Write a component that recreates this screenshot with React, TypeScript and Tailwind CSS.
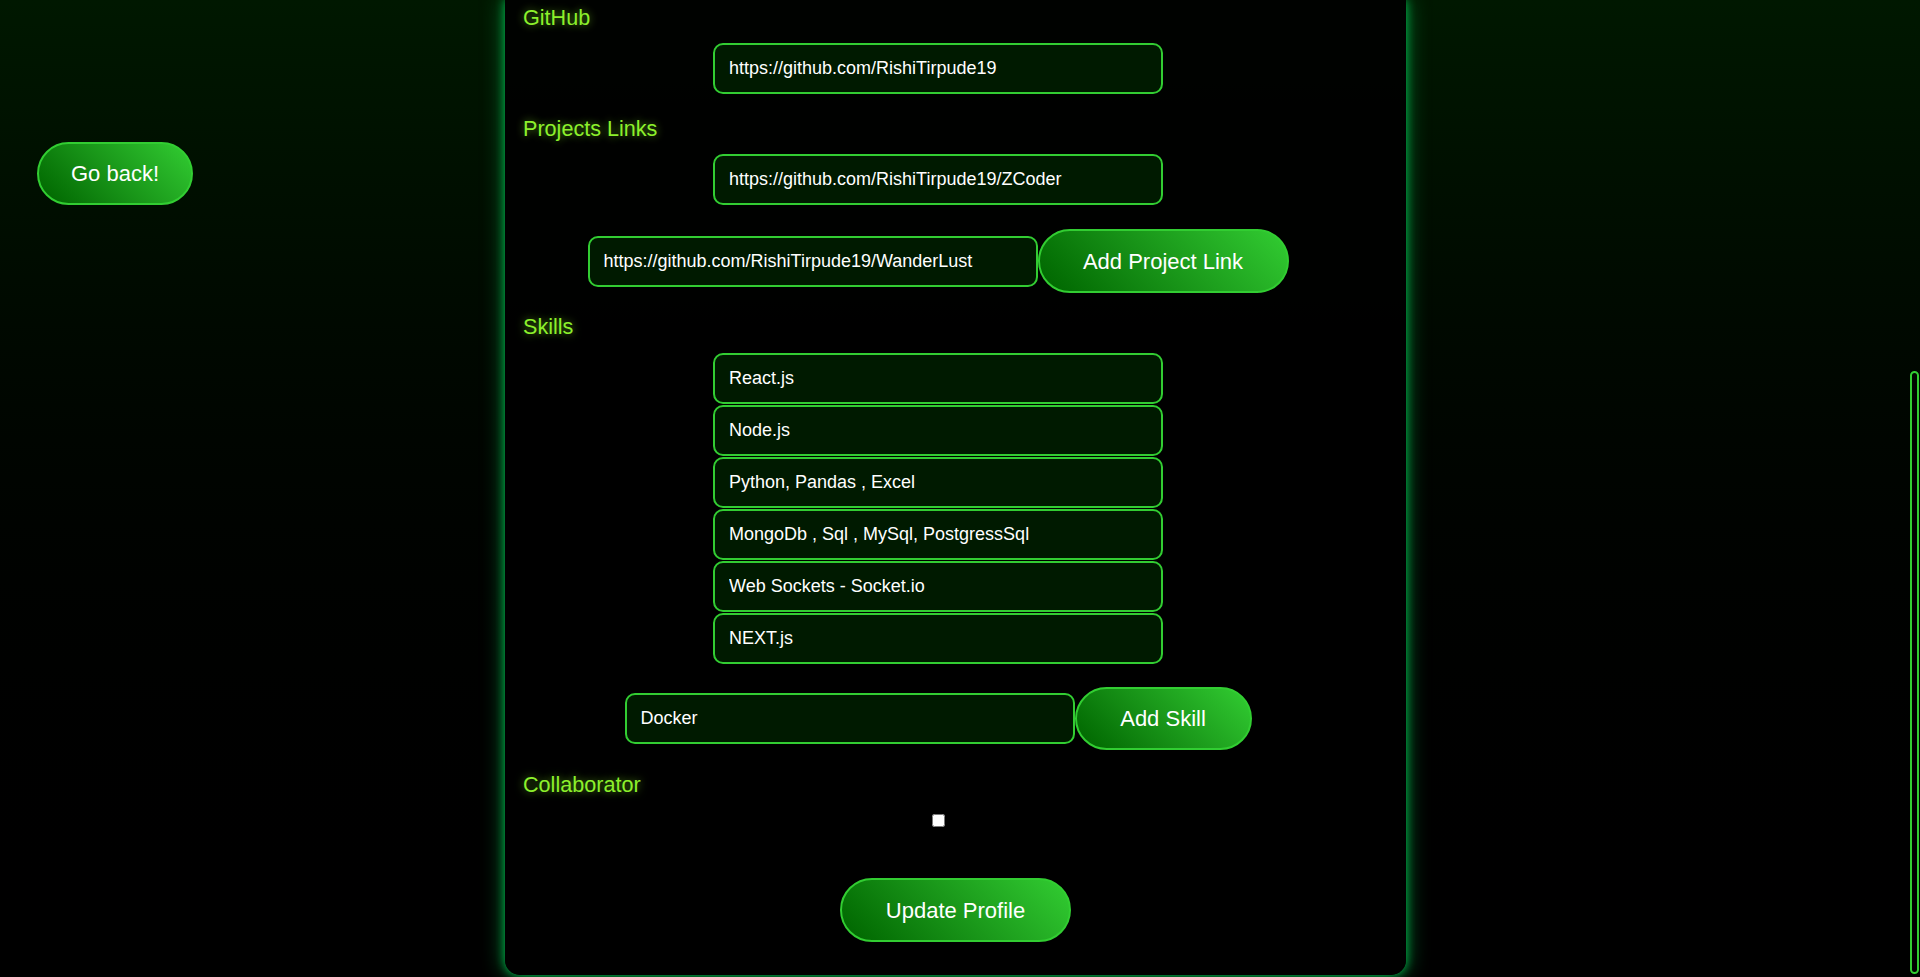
import React, { useState } from 'react'

const inputCls =
  'h-[51px] w-[450px] shrink-0 rounded-[10px] border-2 border-[#32cd32] bg-[#001a00] px-[14px] text-[18px] text-white outline-none'

const btnCls =
  'shrink-0 rounded-[32px] border-2 border-[#32cd32] bg-linear-45 from-[#006400] to-[#32cd32] text-[22px] text-white'

function Label({ children, className = '' }: { children: React.ReactNode; className?: string }) {
  return (
    <div
      className={`self-start h-[26px] text-[21.6px] leading-[26px] text-[#8cf02c] [text-shadow:0_0_8px_rgba(140,240,44,0.6)] ${className}`}
    >
      {children}
    </div>
  )
}

export default function App() {
  const [skills] = useState([
    'React.js',
    'Node.js',
    'Python, Pandas , Excel',
    'MongoDb , Sql , MySql, PostgressSql',
    'Web Sockets - Socket.io',
    'NEXT.js',
  ])
  const [newSkill, setNewSkill] = useState('Docker')
  const [newLink, setNewLink] = useState('https://github.com/RishiTirpude19/WanderLust')

  return (
    <div className="relative flex h-[977px] w-full overflow-hidden bg-linear-to-b from-[#001800] to-black font-['Liberation_Sans',Arial,sans-serif]">
      {/* Left side */}
      <div className="w-[505px] shrink-0 pl-[37px] pt-[142px]">
        <button className={`${btnCls} h-[63px] w-[156px]`}>Go back!</button>
      </div>

      {/* Card */}
      <div className="flex h-[975px] w-[901px] shrink-0 flex-col rounded-b-[15px] bg-black/90 shadow-[0_0_10px_#00b048,0_0_22px_#007a32]">
        <div className="flex flex-col items-center pl-[18px] pr-[53px] pt-[5px]">
          <Label>GitHub</Label>
          <input className={`${inputCls} mt-[12px]`} defaultValue="https://github.com/RishiTirpude19" />

          <Label className="mt-[22px]">Projects Links</Label>
          <input className={`${inputCls} mt-[12px]`} defaultValue="https://github.com/RishiTirpude19/ZCoder" />

          <div className="mt-[24px] flex items-center">
            <input className={inputCls} value={newLink} onChange={(e) => setNewLink(e.target.value)} />
            <button className={`${btnCls} h-[64px] w-[251px]`}>Add Project Link</button>
          </div>

          <Label className="mt-[21px]">Skills</Label>
          <div className="mt-[13px] flex flex-col gap-[1px]">
            {skills.map((s) => (
              <input key={s} className={inputCls} defaultValue={s} />
            ))}
          </div>

          <div className="mt-[23px] flex items-center">
            <input className={inputCls} value={newSkill} onChange={(e) => setNewSkill(e.target.value)} />
            <button className={`${btnCls} h-[63px] w-[177px]`}>Add Skill</button>
          </div>

          <Label className="mt-[22px]">Collaborator</Label>
          <input type="checkbox" className="mt-[16px] h-[13px] w-[13px] m-0" />
        </div>

        <div className="mt-[51px] flex justify-center">
          <button className={`${btnCls} h-[64px] w-[231px]`}>Update Profile</button>
        </div>
      </div>

      {/* Scrollbar thumb */}
      <div className="absolute right-[1px] top-[371px] h-[603px] w-[9px] rounded-full border-[2.5px] border-[#32cd32]" />
    </div>
  )
}
